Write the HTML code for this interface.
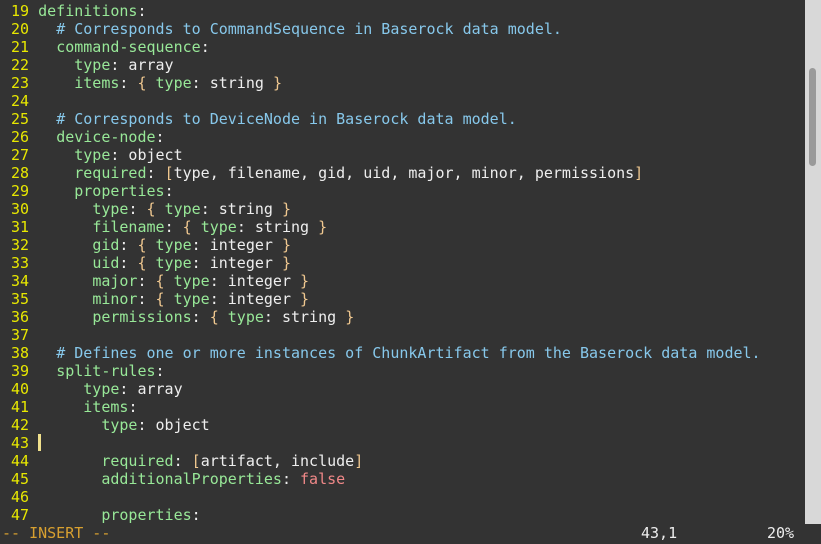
<!DOCTYPE html>
<html><head><meta charset="utf-8"><style>
html,body{margin:0;padding:0;background:#333333;width:821px;height:544px;overflow:hidden}
#ed{position:absolute;left:2px;top:2px;font-family:"DejaVu Sans Mono","Liberation Mono",monospace;font-size:15px;line-height:18px;white-space:pre;color:#eeeeee}
.n{color:#e8e800}.k{color:#98e898}.c{color:#87c8eb}.b{color:#f0c890}.f{color:#f08888}
#sb{position:absolute;left:805px;top:0;width:16px;height:524px;background:#d8d8d8}
#th{position:absolute;left:809px;top:68px;width:7px;height:98px;background:#9a9a9a;border-radius:4px}
#cur{position:absolute;left:38px;top:434px;width:3px;height:17px;background:#f0e08c}
.st{position:absolute;top:524px;font-family:"DejaVu Sans Mono","Liberation Mono",monospace;font-size:15px;line-height:18px;white-space:pre;color:#eeeeee}
</style></head><body>
<div id="ed"><span class="n"> 19 </span><span class="k">definitions</span>:
<span class="n"> 20 </span>  <span class="c"># Corresponds to CommandSequence in Baserock data model.</span>
<span class="n"> 21 </span>  <span class="k">command-sequence</span>:
<span class="n"> 22 </span>    <span class="k">type</span>: array
<span class="n"> 23 </span>    <span class="k">items</span>: <span class="b">{</span> <span class="k">type</span>: string <span class="b">}</span>
<span class="n"> 24 </span>
<span class="n"> 25 </span>  <span class="c"># Corresponds to DeviceNode in Baserock data model.</span>
<span class="n"> 26 </span>  <span class="k">device-node</span>:
<span class="n"> 27 </span>    <span class="k">type</span>: object
<span class="n"> 28 </span>    <span class="k">required</span>: <span class="b">[</span>type, filename, gid, uid, major, minor, permissions<span class="b">]</span>
<span class="n"> 29 </span>    <span class="k">properties</span>:
<span class="n"> 30 </span>      <span class="k">type</span>: <span class="b">{</span> <span class="k">type</span>: string <span class="b">}</span>
<span class="n"> 31 </span>      <span class="k">filename</span>: <span class="b">{</span> <span class="k">type</span>: string <span class="b">}</span>
<span class="n"> 32 </span>      <span class="k">gid</span>: <span class="b">{</span> <span class="k">type</span>: integer <span class="b">}</span>
<span class="n"> 33 </span>      <span class="k">uid</span>: <span class="b">{</span> <span class="k">type</span>: integer <span class="b">}</span>
<span class="n"> 34 </span>      <span class="k">major</span>: <span class="b">{</span> <span class="k">type</span>: integer <span class="b">}</span>
<span class="n"> 35 </span>      <span class="k">minor</span>: <span class="b">{</span> <span class="k">type</span>: integer <span class="b">}</span>
<span class="n"> 36 </span>      <span class="k">permissions</span>: <span class="b">{</span> <span class="k">type</span>: string <span class="b">}</span>
<span class="n"> 37 </span>
<span class="n"> 38 </span>  <span class="c"># Defines one or more instances of ChunkArtifact from the Baserock data model.</span>
<span class="n"> 39 </span>  <span class="k">split-rules</span>:
<span class="n"> 40 </span>     <span class="k">type</span>: array
<span class="n"> 41 </span>     <span class="k">items</span>:
<span class="n"> 42 </span>       <span class="k">type</span>: object
<span class="n"> 43 </span>
<span class="n"> 44 </span>       <span class="k">required</span>: <span class="b">[</span>artifact, include<span class="b">]</span>
<span class="n"> 45 </span>       <span class="k">additionalProperties</span>: <span class="f">false</span>
<span class="n"> 46 </span>
<span class="n"> 47 </span>       <span class="k">properties</span>:</div>
<div id="cur"></div>
<div id="sb"></div><div id="th"></div>
<div class="st" style="left:2px;color:#d8a030">-- INSERT --</div>
<div class="st" style="left:641px">43,1</div>
<div class="st" style="left:767px">20%</div>
</body></html>
